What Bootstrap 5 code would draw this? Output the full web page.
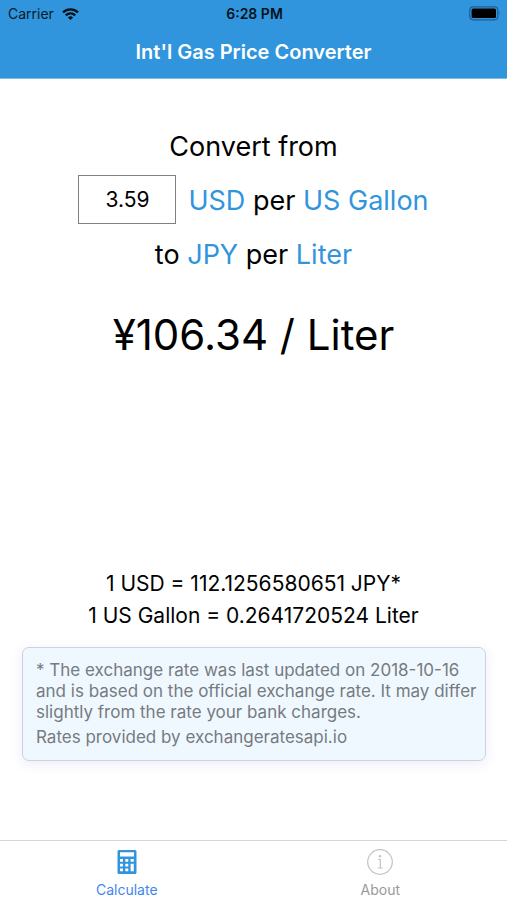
<!DOCTYPE html>
<html lang="en">
<head>
<meta charset="utf-8">
<meta name="viewport" content="width=device-width, initial-scale=1">
<title>Int'l Gas Price Converter</title>
<link href="https://cdn.jsdelivr.net/npm/bootstrap@5.3.0/dist/css/bootstrap.min.css" rel="stylesheet">
<style>
  body { font-family: Inter, "Liberation Sans", sans-serif; color: #000; background: #fff; }
  .app-header { background: #3095dc; border-bottom: 1px solid #7fbcea; }
  .status-bar { height: 27px; font-size: 14px; line-height: 27px; color: #0a1a26; padding: 0 6px 0 8px; }
  .status-time { font-weight: 600; color: #06121b; }
  .app-title { font-size: 20px; line-height: 51px; font-weight: 600; color: #fff; }
  .converter { padding-top: 41px; }
  .line { min-height: 54px; font-size: 27px; line-height: 54px; }
  .pick { font: inherit; color: #3095dc; background: none; border: 0; padding: 0; }
  .amount { width: 98px; height: 49px; padding: 0; margin: 0 12px 4px 0; font-size: 21px; color: #000; text-align: center; border: 1px solid #808080; border-radius: 0; }
  .result { font-size: 42px; line-height: 54px; margin-top: 26px; }
  .rates { padding-bottom: 79px; }
  .rate { font-size: 21px; line-height: 32px; color: #000; }
  .note { margin: 15px 21px 0 22px; padding: 12px 4px 12px 13px; font-size: 17px; line-height: 21px; color: #757b80; background: #f0f8ff; border: 1px solid #cdd3de; border-radius: 7px; box-shadow: 0 3px 12px rgba(90, 90, 220, .12); }
  .tabs { height: 60px; border-top: 1px solid #d6d6d6; background: #fff; }
  .tab-link { font-size: 14px; line-height: 16px; color: #999; padding-top: 8px; }
  .tab-link.active { color: #3f86ef; }
  .tab-link svg { margin-bottom: 7px; }
</style>
<script src="https://cdn.jsdelivr.net/npm/bootstrap@5.3.0/dist/js/bootstrap.bundle.min.js" defer></script>
</head>
<body>
<div class="d-flex flex-column min-vh-100">
  <header class="app-header">
    <div class="status-bar row g-0">
      <div class="col d-flex align-items-center gap-2">
        <span>Carrier</span>
        <svg width="17" height="12" viewBox="0 0 17 12" fill="none" stroke="#06121b" stroke-width="2.3" aria-hidden="true">
          <path d="M1 4.4a10.6 10.6 0 0 1 15 0"/>
          <path d="M3.800 7.400a6.600 6.600 0 0 1 9.400 0"/>
          <path d="M8.500 12 5.900 9.500a3.700 3.700 0 0 1 5.200 0z" fill="#06121b" stroke="none"/>
        </svg>
      </div>
      <div class="status-time col-auto">6:28 PM</div>
      <div class="col d-flex align-items-center justify-content-end">
        <svg width="32" height="15" viewBox="0 0 32 15" aria-hidden="true">
          <rect x=".8" y=".8" width="28" height="13" rx="3.500" fill="none" stroke="#1d5f92" stroke-width="1.200"/>
          <rect x="2.600" y="2.600" width="24.400" height="9.400" rx="1.500" fill="#000"/>
          <path d="M30 5.300q1.800 2 0 4z" fill="#1d5f92"/>
        </svg>
      </div>
    </div>
    <h1 class="app-title text-center mb-0">Int'l Gas Price Converter</h1>
  </header>

  <main class="flex-grow-1 d-flex flex-column">
    <section class="converter text-center">
      <label class="line d-block" for="amount">Convert from</label>
      <div class="line d-flex justify-content-center align-items-center">
        <input class="amount form-control flex-shrink-0" id="amount" type="text" inputmode="decimal" value="3.59">
        <div><button class="pick" type="button">USD</button> per <button class="pick" type="button">US Gallon</button></div>
      </div>
      <div class="line">to <button class="pick" type="button">JPY</button> per <button class="pick" type="button">Liter</button></div>
      <output class="result d-block" for="amount">¥106.34 / Liter</output>
    </section>

    <section class="rates mt-auto">
      <p class="rate text-center mb-0">1 USD = 112.1256580651 JPY*</p>
      <p class="rate text-center mb-0">1 US Gallon = 0.2641720524 Liter</p>
      <div class="note">
        <p class="mb-1">* The exchange rate was last updated on 2018-10-16 and is based on the official exchange rate. It may differ slightly from the rate your bank charges.</p>
        <p class="mb-0">Rates provided by exchangeratesapi.io</p>
      </div>
    </section>
  </main>

  <nav class="tabs row g-0" aria-label="Main">
    <a class="tab-link active col d-flex flex-column align-items-center text-decoration-none" href="#calculate" aria-current="page">
      <svg width="20" height="26" viewBox="0 0 20 26" aria-hidden="true">
        <path fill="#3095dc" fill-rule="evenodd" d="M2 1h16q1.500 0 1.500 1.500v21q0 1.500-1.500 1.500H2Q.5 25 .5 23.500v-21Q.5 1 2 1zM3 3.200v4.300h14V3.200zM3 10v2.700h3V10zm5.300 0v2.700h3V10zm5.300 0v2.700h3.200V10zM3 14.800v2.700h3v-2.700zm5.300 0v2.700h3v-2.700zm5.300 0v7.500h3.200v-7.500zM3 19.600v2.700h3v-2.700zm5.300 0v2.700h3v-2.700z"/>
      </svg>
      Calculate
    </a>
    <a class="tab-link col d-flex flex-column align-items-center text-decoration-none" href="#about">
      <svg width="26" height="26" viewBox="0 0 26 26" fill="none" stroke="#c2c2c2" stroke-width="1.200" aria-hidden="true">
        <circle cx="13" cy="13" r="12.300"/>
        <path d="M11 10.500h2.300V19M10.800 19h4.800"/>
        <circle cx="13" cy="7.300" r="1.200" fill="#c2c2c2" stroke="none"/>
      </svg>
      About
    </a>
  </nav>
</div>
</body>
</html>
